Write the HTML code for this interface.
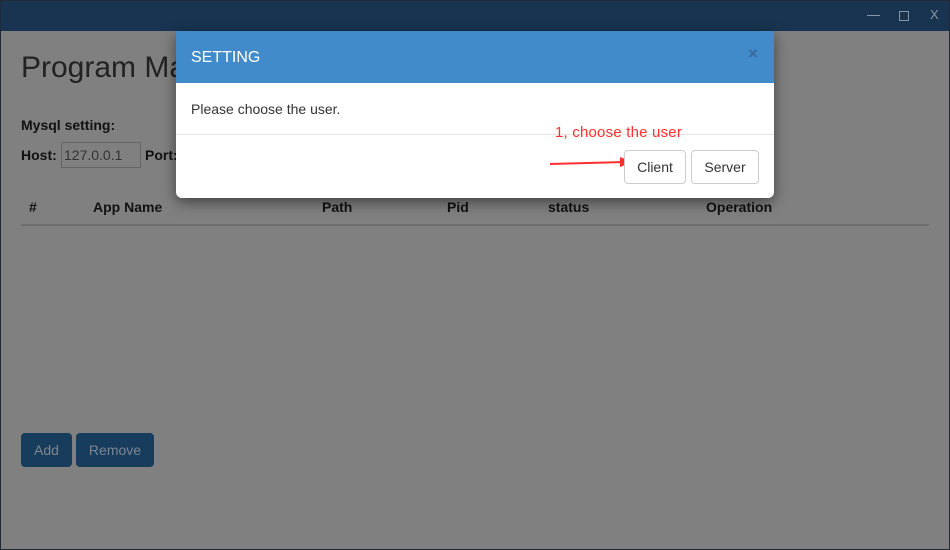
<!DOCTYPE html>
<html><head><style>
*{margin:0;padding:0;box-sizing:border-box}
body{width:950px;height:550px;overflow:hidden;background:#808080;font-family:"Liberation Sans",Arial,sans-serif;position:relative;color:#111}
.frame{position:absolute;left:0;top:0;width:950px;height:550px;border:1px solid #1e2a36;pointer-events:none}
.bar{position:absolute;left:0;top:0;width:950px;height:31px;background:#183450}
.ctl{position:absolute;top:7px;color:#8a96a3;font-size:13px}
.abs{position:absolute;white-space:nowrap}
b{font-weight:bold}
.modal{position:absolute;left:176px;top:31px;width:598px;height:167px;background:#fff;border-radius:0 0 6px 6px;box-shadow:0 4px 14px rgba(0,0,0,.5);overflow:hidden}
.mh{height:52px;background:#418bca;color:#fff;font-size:16px;padding:18px 15px}
.btn{position:absolute;top:119px;height:34px;border:1px solid #ccc;border-radius:4px;background:#fff;font-size:14px;color:#333;text-align:center;line-height:32px}
.bb{position:absolute;top:433px;height:34px;background:#183c5c;border-radius:4px;color:#7d8690;font-size:14px;text-align:center;line-height:34px}
</style></head><body>
<div class="bar"></div>
<div class="abs" style="left:867px;top:15px;width:13px;height:1px;background:#8a96a3"></div>
<div class="abs" style="left:899px;top:11px;width:10px;height:10px;border:1px solid #8a96a3"></div>
<div class="ctl" style="left:930px">X</div>
<div class="abs" style="left:21px;top:51px;font-size:30px;color:#222">Program Ma</div>
<div class="abs" style="left:21px;top:117px;font-size:14px"><b>Mysql setting:</b></div>
<div class="abs" style="left:21px;top:147px;font-size:14px"><b>Host:</b></div>
<div class="abs" style="left:61px;top:142px;width:80px;height:26px;border:1px solid #666;font-size:14px;padding:4px 2px;color:#333">127.0.0.1</div>
<div class="abs" style="left:145px;top:147px;font-size:14px"><b>Port:</b></div>
<div class="abs" style="left:29px;top:199px;font-size:14px"><b>#</b></div>
<div class="abs" style="left:93px;top:199px;font-size:14px"><b>App Name</b></div>
<div class="abs" style="left:322px;top:199px;font-size:14px"><b>Path</b></div>
<div class="abs" style="left:447px;top:199px;font-size:14px"><b>Pid</b></div>
<div class="abs" style="left:548px;top:199px;font-size:14px"><b>status</b></div>
<div class="abs" style="left:706px;top:199px;font-size:14px"><b>Operation</b></div>
<div class="abs" style="left:21px;top:224px;width:908px;height:2px;background:#6e6e6e"></div>
<div class="bb" style="left:21px;width:51px">Add</div>
<div class="bb" style="left:76px;width:78px">Remove</div>
<div class="modal">
<div class="mh">SETTING</div>
<div class="abs" style="left:572px;top:13px;font-size:17px;color:#3a6b98;font-weight:bold">×</div>
<div class="abs" style="left:15px;top:70px;font-size:14px;color:#333">Please choose the user.</div>
<div class="abs" style="left:0;top:103px;width:598px;height:1px;background:#e5e5e5"></div>
<div class="abs" style="left:379px;top:93px;font-size:15px;color:#ff3030;font-family:'Liberation Sans',sans-serif;letter-spacing:0.2px">1, choose the user</div>
<div class="abs" style="left:374px;top:131px;width:75px;height:2px;background:#ff3030;transform:rotate(-1.5deg)"></div>
<div class="abs" style="left:444px;top:126px;width:0;height:0;border-left:13px solid #ff3030;border-top:5px solid transparent;border-bottom:5px solid transparent"></div>
<div class="btn" style="left:448px;width:62px">Client</div>
<div class="btn" style="left:515px;width:68px">Server</div>
</div>
<div class="frame"></div>
</body></html>
